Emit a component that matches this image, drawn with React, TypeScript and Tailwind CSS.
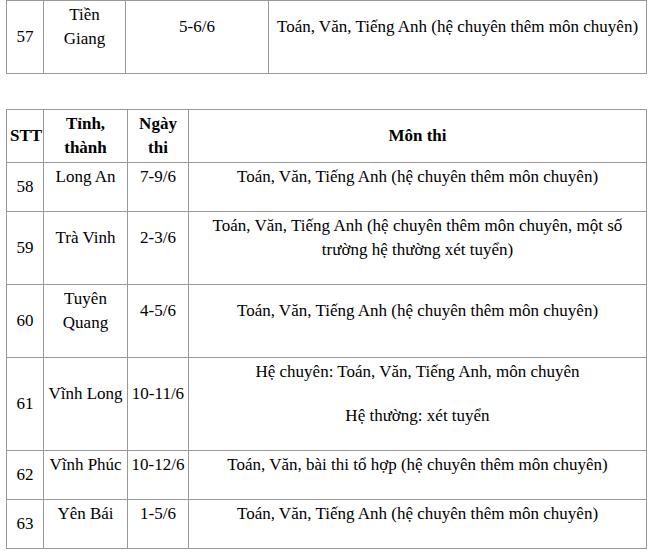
const font = "[font-family:Liberation_Serif,Times_New_Roman,serif] text-[17px] leading-[24px] text-black"
const cell = "border border-[#999] px-[3px] py-[2px] text-center align-middle"

const rows = [
  { stt: "58", name: "Long An", date: "7-9/6", subjects: ["Toán, Văn, Tiếng Anh (hệ chuyên thêm môn chuyên)"] },
  {
    stt: "59",
    name: "Trà Vinh",
    date: "2-3/6",
    subjects: ["Toán, Văn, Tiếng Anh (hệ chuyên thêm môn chuyên, một số trường hệ thường xét tuyển)"],
  },
  { stt: "60", name: "Tuyên Quang", date: "4-5/6", subjects: ["Toán, Văn, Tiếng Anh (hệ chuyên thêm môn chuyên)"] },
  {
    stt: "61",
    name: "Vĩnh Long",
    date: "10-11/6",
    subjects: ["Hệ chuyên: Toán, Văn, Tiếng Anh, môn chuyên", "Hệ thường: xét tuyển"],
  },
  { stt: "62", name: "Vĩnh Phúc", date: "10-12/6", subjects: ["Toán, Văn, bài thi tổ hợp (hệ chuyên thêm môn chuyên)"] },
  { stt: "63", name: "Yên Bái", date: "1-5/6", subjects: ["Toán, Văn, Tiếng Anh (hệ chuyên thêm môn chuyên)"] },
]

export default function App() {
  return (
    <div className={`min-h-[556px] bg-white px-[6px] ${font}`}>
      {/* tail of the previous table */}
      <table className={`w-[640px] table-fixed border-collapse ${font}`}>
        <colgroup>
          <col className="w-[37px]" />
          <col className="w-[82px]" />
          <col className="w-[143px]" />
          <col className="w-[378px]" />
        </colgroup>
        <tbody>
          <tr>
            <td className={cell}>57</td>
            <td className={cell}>
              <p className="mb-5">
                Tiền
                <br />
                Giang
              </p>
            </td>
            <td className={cell}>
              <p className="mb-5">5-6/6</p>
            </td>
            <td className={cell}>
              <p className="mb-5">Toán, Văn, Tiếng Anh (hệ chuyên thêm môn chuyên)</p>
            </td>
          </tr>
        </tbody>
      </table>

      <table className={`mt-[35px] w-[640px] table-fixed border-collapse ${font}`}>
        <colgroup>
          <col className="w-[37px]" />
          <col className="w-[84px]" />
          <col className="w-[61px]" />
          <col className="w-[458px]" />
        </colgroup>
        <thead>
          <tr>
            <th className={`${cell} font-bold`}>STT</th>
            <th className={`${cell} font-bold`}>Tỉnh, thành</th>
            <th className={`${cell} font-bold`}>Ngày thi</th>
            <th className={`${cell} font-bold`}>Môn thi</th>
          </tr>
        </thead>
        <tbody>
          {rows.map((r) => (
            <tr key={r.stt}>
              <td className={cell}>{r.stt}</td>
              <td className={cell}>
                <p className="mb-5">{r.name}</p>
              </td>
              <td className={cell}>
                <p className="mb-5">{r.date}</p>
              </td>
              <td className={cell}>
                {r.subjects.map((s) => (
                  <p key={s} className="mb-5">
                    {s}
                  </p>
                ))}
              </td>
            </tr>
          ))}
        </tbody>
      </table>
    </div>
  )
}
